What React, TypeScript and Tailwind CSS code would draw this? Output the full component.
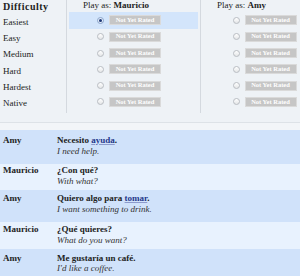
import React from 'react';

const levels = ['Easiest', 'Easy', 'Medium', 'Hard', 'Hardest', 'Native'];

const lines = [
  { who: 'Amy', es: <>Necesito <a className="text-[#24378a] underline decoration-[#8c9acb] underline-offset-[1px]">ayuda</a>.</>, en: 'I need help.', row: 'h-[34px] pt-[5px] bg-[#d0e2fa]' },
  { who: 'Mauricio', es: <>¿Con qué?</>, en: 'With what?', row: 'h-[26px] pt-[1px] bg-[#e8f2fe]' },
  { who: 'Amy', es: <>Quiero algo para <a className="text-[#24378a] underline decoration-[#8c9acb] underline-offset-[1px]">tomar</a>.</>, en: 'I want something to drink.', row: 'h-[32px] pt-[3px] bg-[#d0e2fa]' },
  { who: 'Mauricio', es: <>¿Qué quieres?</>, en: 'What do you want?', row: 'h-[27px] pt-[2px] bg-[#e8f2fe]' },
  { who: 'Amy', es: <>Me gustaría un café.</>, en: "I'd like a coffee.", row: 'flex-1 pt-[3.5px] bg-[#d0e2fa]' },
];

function Radio({ checked }: { checked?: boolean }) {
  if (checked) {
    return (
      <span className="w-[7px] h-[7px] rounded-full border border-[#8aa5cc] bg-[#e3ecf8] flex items-center justify-center shrink-0">
        <span className="w-[3px] h-[3px] rounded-full bg-[#1d3875]" />
      </span>
    );
  }
  return <span className="w-[7px] h-[7px] rounded-full border border-[#b9bdc2] bg-gradient-to-b from-white to-[#e4e6e8] shrink-0" />;
}

function RateButton() {
  return (
    <span className="ml-[5px] w-[52px] h-[10px] border border-[#dadada] bg-[#c6c6c6] text-white font-bold text-[6.5px] leading-none flex items-center justify-center whitespace-nowrap">
      Not Yet Rated
    </span>
  );
}

function PlayerColumn({ name, width, pad, selected }: { name: string; width: string; pad: string; selected?: number }) {
  return (
    <div className={width}>
      <div className="h-[12.3px] pl-[16px] flex items-center whitespace-nowrap">
        Play as:&nbsp;<b>{name}</b>
      </div>
      {levels.map((l, i) => (
        <div key={l} className="h-[16.3px] px-[2px]">
          <div className={`h-full flex items-center ${pad} ${i === selected ? 'bg-[#d3e5fb]' : ''}`}>
            <Radio checked={i === selected} />
            <RateButton />
          </div>
        </div>
      ))}
    </div>
  );
}

export default function App() {
  return (
    <div className="w-[300px] h-[276px] overflow-hidden flex flex-col bg-[#eef2f6] text-[#222] text-[9px] font-['Liberation_Serif',serif]">
      {/* difficulty table */}
      <div className="flex h-[113px] shrink-0">
        <div className="w-[67px] border-r border-[#d4d9df]">
          <div className="h-[12.3px] pl-[3px] flex items-center font-bold text-[10px] tracking-[0.5px]">Difficulty</div>
          {levels.map(l => (
            <div key={l} className="h-[16.3px] pl-[3px] pt-[4px] flex items-center">{l}</div>
          ))}
        </div>
        <div className="w-[134px] border-r border-[#d4d9df]">
          <PlayerColumn name="Mauricio" width="w-full" pad="pl-[28px]" selected={0} />
        </div>
        <PlayerColumn name="Amy" width="flex-1" pad="pl-[29.5px]" />
      </div>
      <div className="h-[9px] shrink-0" />
      <div className="h-[8px] shrink-0 border-t border-[#dde2e7] bg-[#f2f5f8]" />

      {/* dialogue */}
      {lines.map((d, i) => (
        <div key={i} className={`flex shrink-0 leading-[10.5px] ${d.row}`}>
          <div className="w-[57px] pl-[3px] font-bold">{d.who}</div>
          <div>
            <div className="font-bold">{d.es}</div>
            <div className="italic text-[#333]">{d.en}</div>
          </div>
        </div>
      ))}
    </div>
  );
}
